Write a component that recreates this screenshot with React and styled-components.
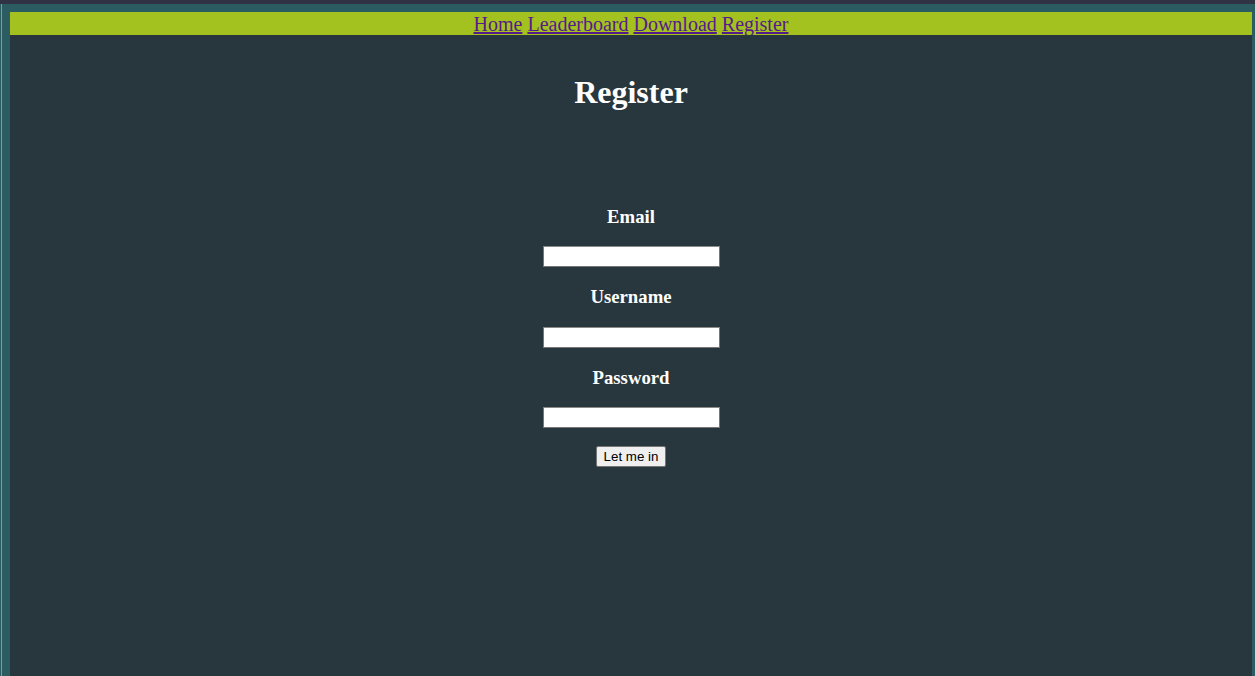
import React from "react";
import styled, { createGlobalStyle } from "styled-components";

const GlobalStyle = createGlobalStyle`
  html, body {
    margin: 0;
    padding: 0;
    height: 100%;
    background: #2f3343;
  }
  #root {
    height: 100%;
  }
`;

const Frame = styled.div`
  display: flex;
  flex-direction: column;
  height: 100vh;
  overflow: hidden;
`;

const TopStrip = styled.div`
  height: 4px;
  flex: none;
  background: #2f3343;
`;

const Row = styled.div`
  flex: 1;
  display: flex;
  min-height: 0;
`;

const Edge = styled.div`
  width: 2px;
  flex: none;
  background: linear-gradient(to right, #2b5c62 0 1px, #3cbf8c 1px 2px);
`;

const Window = styled.div`
  flex: 1;
  display: flex;
  background: #2b5c62;
  padding: 8px 3px 0 8px;
`;

const Page = styled.div`
  flex: 1;
  background: #28373d;
  font-family: "Liberation Serif", "Times New Roman", serif;
  color: #ffffff;
  text-align: center;
`;

const Nav = styled.nav`
  background: #a3c11f;
  font-size: 20px;
  line-height: 25px;
  height: 23px;
  overflow: hidden;

  a {
    color: #551a8b;
    text-decoration: underline;
  }
`;

const Title = styled.h1`
  font-size: 32px;
  line-height: 37px;
  font-weight: bold;
  margin: 39px 0 0;
`;

const Form = styled.form`
  margin-top: 95px;
  display: flex;
  flex-direction: column;
  align-items: center;
`;

const Label = styled.h3`
  font-size: 18.72px;
  line-height: 21.5px;
  font-weight: bold;
  margin: 19.4px 0 18.6px;
  &:first-child {
    margin-top: 0;
  }
`;

const Input = styled.input`
  box-sizing: border-box;
  width: 177px;
  height: 21px;
  border: 1px solid #767676;
  border-top-color: #8a8a8a;
  padding: 1px 2px;
  font: 13.33px "Liberation Sans", Arial, sans-serif;
  background: #ffffff;
`;

const Button = styled.button`
  margin-top: 18px;
  height: 21px;
  padding: 1px 7px;
  font: 13.33px "Liberation Sans", Arial, sans-serif;
  color: #000;
  background: #efefef;
  border: 1px solid #767676;
  border-radius: 2px;
`;

const links = ["Home", "Leaderboard", "Download", "Register"];

export default function App() {
  return (
    <>
      <GlobalStyle />
      <Frame>
        <TopStrip />
        <Row>
          <Edge />
          <Window>
            <Page>
              <Nav>
                {links.map((l, i) => (
                  <React.Fragment key={l}>
                    {i > 0 && " "}
                    <a href="#">{l}</a>
                  </React.Fragment>
                ))}
              </Nav>
              <Title>Register</Title>
              <Form onSubmit={(e) => e.preventDefault()}>
                <Label>Email</Label>
                <Input type="text" />
                <Label>Username</Label>
                <Input type="text" />
                <Label>Password</Label>
                <Input type="password" />
                <Button type="submit">Let me in</Button>
              </Form>
            </Page>
          </Window>
        </Row>
      </Frame>
    </>
  );
}
